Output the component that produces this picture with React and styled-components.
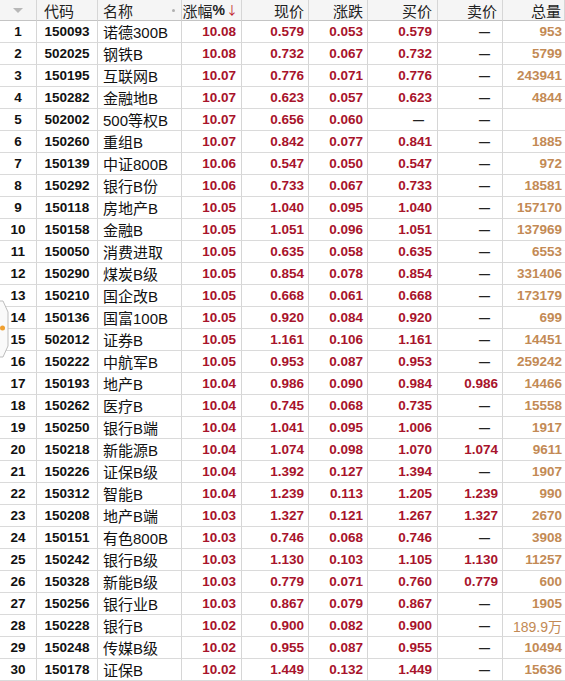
import React from "react";
import styled, { createGlobalStyle } from "styled-components";

const Global = createGlobalStyle`
  html, body { margin: 0; padding: 0; background: #fff; }
  body { font-family: "Liberation Sans", "Noto Sans CJK SC", sans-serif; }
`;

const COLS = "37px 61px 84px 60px 67px 59px 70px 65px 62px";

const Wrap = styled.div`
  position: relative;
  width: 565px;
  height: 681px;
  overflow: hidden;
  background: #fff;
`;

const Grid = styled.div`
  display: grid;
  grid-template-columns: ${COLS};
`;

const HeadCell = styled.div`
  position: relative;
  height: 20px;
  border-bottom: 1px solid #c4c4c4;
  border-right: 1px solid #d6d6d6;
  background: #f5f5f5;
  box-sizing: content-box;
  display: flex;
  align-items: center;
  justify-content: ${(p) => p.$align || "flex-end"};
  padding: 0 ${(p) => p.$pr ?? 4}px 0 ${(p) => p.$pl ?? 4}px;
  font-family: "Noto Sans CJK SC", sans-serif;
  font-size: 15px;
  color: #222;
  line-height: 1;
  white-space: nowrap;
  &:last-child { border-right: none; }
`;

const Cell = styled.div`
  height: 21px;
  border-bottom: 1px solid #dadada;
  border-right: 1px solid #d6d6d6;
  box-sizing: content-box;
  display: flex;
  align-items: center;
  justify-content: ${(p) => p.$align || "flex-end"};
  padding: 0 ${(p) => p.$pr ?? 4}px 0 ${(p) => p.$pl ?? 4}px;
  font-family: ${(p) =>
    p.$name
      ? `"Liberation Sans", "Noto Sans CJK SC", sans-serif`
      : `"Liberation Sans", sans-serif`};
  font-size: ${(p) => (p.$name ? "15px" : "13.5px")};
  font-weight: ${(p) => (p.$name ? 400 : 700)};
  color: ${(p) => p.$color || "#111"};
  white-space: nowrap;
  overflow: hidden;
  &:nth-child(9n) { border-right: none; }
`;

const VolCell = styled(Cell)`
  color: #c38a55;
  font-family: "Liberation Sans", "Noto Sans CJK SC", sans-serif;
  font-weight: ${(p) => (p.$wan ? 400 : 700)};
  font-size: ${(p) => (p.$wan ? "14px" : "13.5px")};
`;

const Dash = styled.span`
  font-family: "Liberation Sans", sans-serif;
  font-size: 11px;
  font-weight: 700;
  color: #222;
`;

const SortTri = styled.span`
  width: 0;
  height: 0;
  border-left: 5px solid transparent;
  border-right: 5px solid transparent;
  border-top: 5px solid #b8b8b8;
`;

const Dot = styled.span`
  position: absolute;
  right: 6px;
  top: 9px;
  width: 3px;
  height: 3px;
  border-radius: 50%;
  background: #b0b0b0;
`;

const Pct = styled.span`
  font-family: "Liberation Sans", sans-serif;
  font-weight: 700;
  font-size: 14px;
`;

const Arrow = styled.span`
  color: #c0182c;
  font-size: 12px;
  margin-left: 1px;
`;

const SideTab = styled.svg`
  position: absolute;
  left: 0;
  top: 300px;
`;

const RED = "#a8132b";

const rows = [
  ["1", "150093", "诺德300B", "10.08", "0.579", "0.053", "0.579", "—", "953"],
  ["2", "502025", "钢铁B", "10.08", "0.732", "0.067", "0.732", "—", "5799"],
  ["3", "150195", "互联网B", "10.07", "0.776", "0.071", "0.776", "—", "243941"],
  ["4", "150282", "金融地B", "10.07", "0.623", "0.057", "0.623", "—", "4844"],
  ["5", "502002", "500等权B", "10.07", "0.656", "0.060", "—", "—", ""],
  ["6", "150260", "重组B", "10.07", "0.842", "0.077", "0.841", "—", "1885"],
  ["7", "150139", "中证800B", "10.06", "0.547", "0.050", "0.547", "—", "972"],
  ["8", "150292", "银行B份", "10.06", "0.733", "0.067", "0.733", "—", "18581"],
  ["9", "150118", "房地产B", "10.05", "1.040", "0.095", "1.040", "—", "157170"],
  ["10", "150158", "金融B", "10.05", "1.051", "0.096", "1.051", "—", "137969"],
  ["11", "150050", "消费进取", "10.05", "0.635", "0.058", "0.635", "—", "6553"],
  ["12", "150290", "煤炭B级", "10.05", "0.854", "0.078", "0.854", "—", "331406"],
  ["13", "150210", "国企改B", "10.05", "0.668", "0.061", "0.668", "—", "173179"],
  ["14", "150136", "国富100B", "10.05", "0.920", "0.084", "0.920", "—", "699"],
  ["15", "502012", "证券B", "10.05", "1.161", "0.106", "1.161", "—", "14451"],
  ["16", "150222", "中航军B", "10.05", "0.953", "0.087", "0.953", "—", "259242"],
  ["17", "150193", "地产B", "10.04", "0.986", "0.090", "0.984", "0.986", "14466"],
  ["18", "150262", "医疗B", "10.04", "0.745", "0.068", "0.735", "—", "15558"],
  ["19", "150250", "银行B端", "10.04", "1.041", "0.095", "1.006", "—", "1917"],
  ["20", "150218", "新能源B", "10.04", "1.074", "0.098", "1.070", "1.074", "9611"],
  ["21", "150226", "证保B级", "10.04", "1.392", "0.127", "1.394", "—", "1907"],
  ["22", "150312", "智能B", "10.04", "1.239", "0.113", "1.205", "1.239", "990"],
  ["23", "150208", "地产B端", "10.03", "1.327", "0.121", "1.267", "1.327", "2670"],
  ["24", "150151", "有色800B", "10.03", "0.746", "0.068", "0.746", "—", "3908"],
  ["25", "150242", "银行B级", "10.03", "1.130", "0.103", "1.105", "1.130", "11257"],
  ["26", "150328", "新能B级", "10.03", "0.779", "0.071", "0.760", "0.779", "600"],
  ["27", "150256", "银行业B", "10.03", "0.867", "0.079", "0.867", "—", "1905"],
  ["28", "150228", "银行B", "10.02", "0.900", "0.082", "0.900", "—", "189.9万"],
  ["29", "150248", "传媒B级", "10.02", "0.955", "0.087", "0.955", "—", "10494"],
  ["30", "150178", "证保B", "10.02", "1.449", "0.132", "1.449", "—", "15636"],
];

function priceCell(v, key, pr) {
  if (v === "—") {
    return (
      <Cell key={key} $pr={pr + 8}>
        <Dash>—</Dash>
      </Cell>
    );
  }
  return (
    <Cell key={key} $color={RED} $pr={pr}>
      {v}
    </Cell>
  );
}

export default function App() {
  return (
    <Wrap>
      <Global />
      <Grid>
        <HeadCell $align="center">
          <SortTri />
        </HeadCell>
        <HeadCell $align="flex-start" $pl={7}>代码</HeadCell>
        <HeadCell $align="flex-start" $pl={5}>
          名称
          <Dot />
        </HeadCell>
        <HeadCell $pr={3}>
          涨幅<Pct>%</Pct>
          <Arrow>↓</Arrow>
        </HeadCell>
        <HeadCell $pr={4}>现价</HeadCell>
        <HeadCell $pr={4}>涨跌</HeadCell>
        <HeadCell $pr={5}>买价</HeadCell>
        <HeadCell $pr={5}>卖价</HeadCell>
        <HeadCell $pr={3}>总量</HeadCell>
        {rows.map((r) => (
          <React.Fragment key={r[0]}>
            <Cell $align="center" $pl={0} $pr={0}>{r[0]}</Cell>
            <Cell $align="center" $pl={0} $pr={0}>{r[1]}</Cell>
            <Cell $name $align="flex-start" $pl={5}>{r[2]}</Cell>
            <Cell $color={RED} $pr={5}>{r[3]}</Cell>
            <Cell $color={RED} $pr={4}>{r[4]}</Cell>
            <Cell $color={RED} $pr={4}>{r[5]}</Cell>
            {priceCell(r[6], "b" + r[0], 5)}
            {priceCell(r[7], "s" + r[0], 4)}
            <VolCell $pr={3} $wan={r[8].includes("万")}>
              {r[8]}
            </VolCell>
          </React.Fragment>
        ))}
      </Grid>
      <SideTab width="10" height="58" viewBox="0 0 10 58">
        <path d="M0 1 L3 1 L8 12 L8 46 L3 57 L0 57" fill="#fafafa" stroke="#bdbdbd" strokeWidth="1" />
        <circle cx="2.5" cy="28" r="2.5" fill="#f0a030" />
      </SideTab>
    </Wrap>
  );
}
